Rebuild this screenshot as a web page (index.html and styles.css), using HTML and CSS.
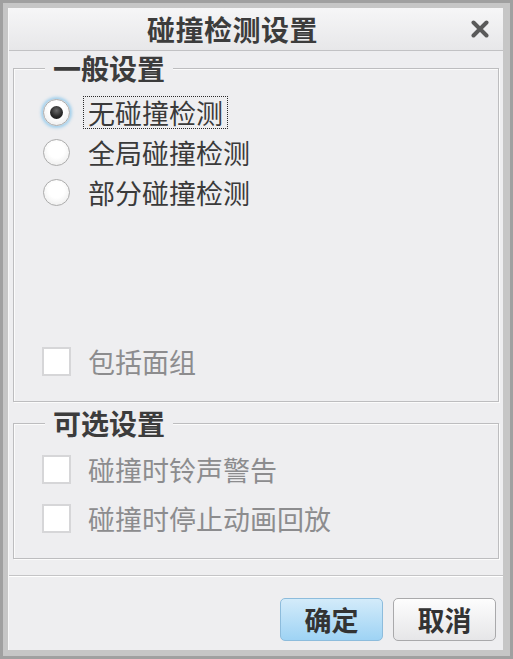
FILE: index.html
```html
<!DOCTYPE html>
<html lang="zh">
<head>
<meta charset="utf-8">
<title>碰撞检测设置</title>
<link rel="stylesheet" href="styles.css">
</head>
<body>
<div class="window">
  <div class="dialog">
    <div class="titlebar">
      <span class="title">碰撞检测设置</span>
      <svg class="close" width="18" height="18" viewBox="0 0 18 18"><path d="M2.5 2.5 L15.5 15.5 M15.5 2.5 L2.5 15.5" stroke="#5a5a5a" stroke-width="4" stroke-linecap="round"/></svg>
    </div>
    <div class="content">
      <div class="group g1">
        <span class="legend">一般设置</span>
        <div class="row first"><span class="radio on"></span><span class="label focus">无碰撞检测</span></div>
        <div class="row"><span class="radio"></span><span class="label">全局碰撞检测</span></div>
        <div class="row"><span class="radio"></span><span class="label">部分碰撞检测</span></div>
        <div class="spacer"></div>
        <div class="row"><span class="check"></span><span class="label dis">包括面组</span></div>
      </div>
      <div class="group g2">
        <span class="legend">可选设置</span>
        <div class="row first2"><span class="check"></span><span class="label dis">碰撞时铃声警告</span></div>
        <div class="row second2"><span class="check"></span><span class="label dis">碰撞时停止动画回放</span></div>
      </div>
    </div>
    <div class="footer">
      <button class="btn ok">确定</button>
      <button class="btn cancel">取消</button>
    </div>
  </div>
</div>
</body>
</html>
```
FILE: styles.css
```css
* { box-sizing: border-box; }
html, body { margin: 0; padding: 0; }
body {
  width: 513px;
  height: 659px;
  background: #a4a4a4;
  font-family: "Noto Sans CJK SC", "Noto Sans", sans-serif;
  overflow: hidden;
}
.window {
  width: 513px;
  height: 659px;
  border: 3px solid #a0a0a0;
  border-right-width: 3px;
  background: #c6c6c6;
  padding: 5px 7px 6px 5px;
}
.dialog {
  width: 100%;
  height: 100%;
  background: #eeeef0;
  display: flex;
  flex-direction: column;
  border-left: 1px solid #f8f8f8;
}
.titlebar {
  height: 43px;
  flex: none;
  display: flex;
  align-items: center;
  background: linear-gradient(#f6f6f7, #e7e7e9);
  border-bottom: 1px solid #c2c2c4;
}
.title {
  margin-left: 138px;
  font-size: 28px;
  font-weight: bold;
  color: #3c3c3c;
  line-height: 30px;
  letter-spacing: 0.5px;
}
.close {
  margin-left: auto;
  margin-right: 14px;
}
.content {
  padding: 4px 4px 0 4px;
  display: flex;
  flex-direction: column;
}
.group {
  border: 1px solid #bdbdbf;
  box-shadow: inset 1px 1px 0 #fbfbfb, 1px 1px 0 #fbfbfb;
  display: flex;
  flex-direction: column;
  align-items: flex-start;
  margin-top: 13px;
}
.g1 { height: 334px; padding-bottom: 20px; }
.g2 { height: 136px; margin-top: 21px; }
.legend {
  margin: -14px 0 0 31px;
  padding: 0 8px;
  background: #eeeef0;
  font-size: 28px;
  font-weight: bold;
  line-height: 26px;
  height: 26px;
  color: #3c3c3c;
}
.row {
  height: 40px;
  display: flex;
  align-items: center;
  padding-left: 29px;
  flex: none;
}
.row.first { margin-top: 11px; }
.row.first2 { margin-top: 13px; }
.row.second2 { margin-top: 9px; }
.spacer { flex: 1; }
.radio {
  width: 27px;
  height: 27px;
  border-radius: 50%;
  border: 1px solid #acacac;
  background: radial-gradient(circle at 50% 40%, #ffffff 40%, #e6e6e6 100%);
  display: flex;
  align-items: center;
  justify-content: center;
  flex: none;
}
.radio.on {
  box-shadow: 0 0 3px 2px rgba(130, 195, 235, 0.7);
}
.radio.on::after {
  content: "";
  width: 13px;
  height: 13px;
  border-radius: 50%;
  background: radial-gradient(circle at 50% 35%, #6a6a6a 0%, #2a2a2a 55%, #111 100%);
}
.check {
  width: 29px;
  height: 29px;
  margin-left: -1px;
  border: 2px solid #d6d6d8;
  background: #ffffff;
  flex: none;
}
.label {
  margin-left: 17px;
  font-size: 27px;
  line-height: 31px;
  color: #3a3a3a;
  white-space: nowrap;
}
.radio + .label { margin-left: 13px; padding: 0 4px; border: 1px dotted transparent; }
.label.focus { border: 1px dotted #2a2a2a; }
.label.dis { color: #8c8c8e; }
.footer {
  margin-top: auto;
  height: 75px;
  border-top: 1px solid #c4c4c6;
  box-shadow: inset 0 1px 0 #ffffff;
  display: flex;
  justify-content: flex-end;
  align-items: flex-start;
  padding: 22px 7px 0 0;
  gap: 10px;
}
.btn {
  width: 103px;
  height: 43px;
  border-radius: 5px;
  font-family: "Noto Sans CJK SC", "Noto Sans", sans-serif;
  font-size: 27px;
  font-weight: bold;
  color: #333;
  line-height: 1;
  padding: 0;
  display: flex;
  align-items: center;
  justify-content: center;
}
.ok {
  border: 1px solid #8dbcdc;
  background: linear-gradient(#d3ebfa, #9ed3f4);
}
.cancel {
  border: 1px solid #a9a9ab;
  background: linear-gradient(#fdfdfd, #e6e6e8);
}
```
